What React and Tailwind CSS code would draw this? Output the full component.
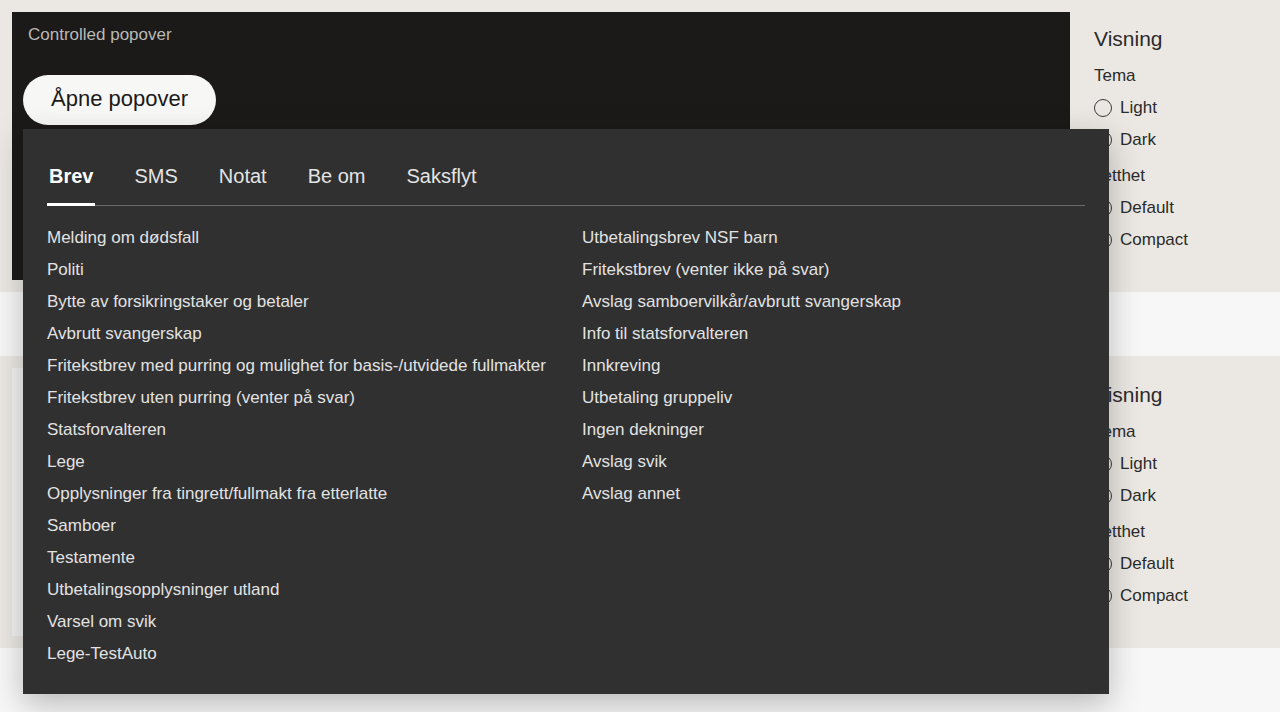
import React from "react";

const left = [
  "Melding om dødsfall",
  "Politi",
  "Bytte av forsikringstaker og betaler",
  "Avbrutt svangerskap",
  "Fritekstbrev med purring og mulighet for basis-/utvidede fullmakter",
  "Fritekstbrev uten purring (venter på svar)",
  "Statsforvalteren",
  "Lege",
  "Opplysninger fra tingrett/fullmakt fra etterlatte",
  "Samboer",
  "Testamente",
  "Utbetalingsopplysninger utland",
  "Varsel om svik",
  "Lege-TestAuto",
];
const right = [
  "Utbetalingsbrev NSF barn",
  "Fritekstbrev (venter ikke på svar)",
  "Avslag samboervilkår/avbrutt svangerskap",
  "Info til statsforvalteren",
  "Innkreving",
  "Utbetaling gruppeliv",
  "Ingen dekninger",
  "Avslag svik",
  "Avslag annet",
];

function Radio({ label }) {
  return (
    <div className="flex items-center gap-2 h-8">
      <span className="w-[18px] h-[18px] rounded-full border-[1.5px] border-[#3a3a3a]" />
      <span className="text-[17px] text-[#2b2b2b]">{label}</span>
    </div>
  );
}

function Sidebar() {
  return (
    <div className="w-[210px] shrink-0 pl-6 pt-[27px]">
      <div className="text-[21px] text-[#2b2b2b] leading-[24px]">Visning</div>
      <div className="text-[17px] text-[#2b2b2b] mt-[13px] leading-[24px]">Tema</div>
      <div className="mt-[4px]">
        <Radio label="Light" />
        <Radio label="Dark" />
      </div>
      <div className="text-[17px] text-[#2b2b2b] mt-[8px] leading-[24px]">Tetthet</div>
      <div className="mt-[4px]">
        <Radio label="Default" />
        <Radio label="Compact" />
      </div>
    </div>
  );
}

export default function App() {
  const tabs = ["Brev", "SMS", "Notat", "Be om", "Saksflyt"];
  return (
    <div className="w-[1280px] h-[712px] overflow-hidden bg-[#f7f7f7] relative" style={{ fontFamily: '"Liberation Sans", Arial, sans-serif' }}>
      <div className="h-[292px] bg-[#ebe8e3] flex">
        <div className="flex-1 p-3 pr-0">
          <div className="h-full bg-[#1b1a18] relative">
            <div className="pl-4 pt-[12px] text-[17px] text-[#b9b9b6] leading-[22px]">Controlled popover</div>
            <div className="pl-[11px] mt-[29px]">
              <button className="h-[50px] px-[28px] rounded-full bg-[#f7f7f6] text-[#1b1a18] text-[22px] pb-[3px]">Åpne popover</button>
            </div>
            <div className="absolute left-[11px] top-[117px] w-[1086px] h-[565px] bg-[#303030] shadow-[0_10px_30px_rgba(0,0,0,0.25)] z-10 px-6 pt-6">
              <div className="flex gap-[37px] border-b border-[#6b6b6b] h-[53px] items-center">
                {tabs.map((t, i) => (
                  <div key={t} className={"h-full flex items-center relative text-[20px] px-[2px] pb-[6px] " + (i === 0 ? "text-white font-bold" : "text-[#e4e4e4]")}>
                    {t}
                    {i === 0 && <span className="absolute left-0 right-0 bottom-[-1px] h-[3px] bg-white" />}
                  </div>
                ))}
              </div>
              <div className="grid grid-cols-2 gap-x-8 mt-4">
                <div>
                  {left.map((t) => (
                    <div key={t} className="h-8 flex items-center text-[17px] text-[#e2e2e2]">{t}</div>
                  ))}
                </div>
                <div>
                  {right.map((t) => (
                    <div key={t} className="h-8 flex items-center text-[17px] text-[#e2e2e2]">{t}</div>
                  ))}
                </div>
              </div>
            </div>
          </div>
        </div>
        <Sidebar />
      </div>
      <div className="h-16" />
      <div className="h-[292px] bg-[#ebe8e3] flex">
        <div className="flex-1 p-3 pr-0">
          <div className="h-full bg-[#f2f2f2]" />
        </div>
        <Sidebar />
      </div>
    </div>
  );
}
